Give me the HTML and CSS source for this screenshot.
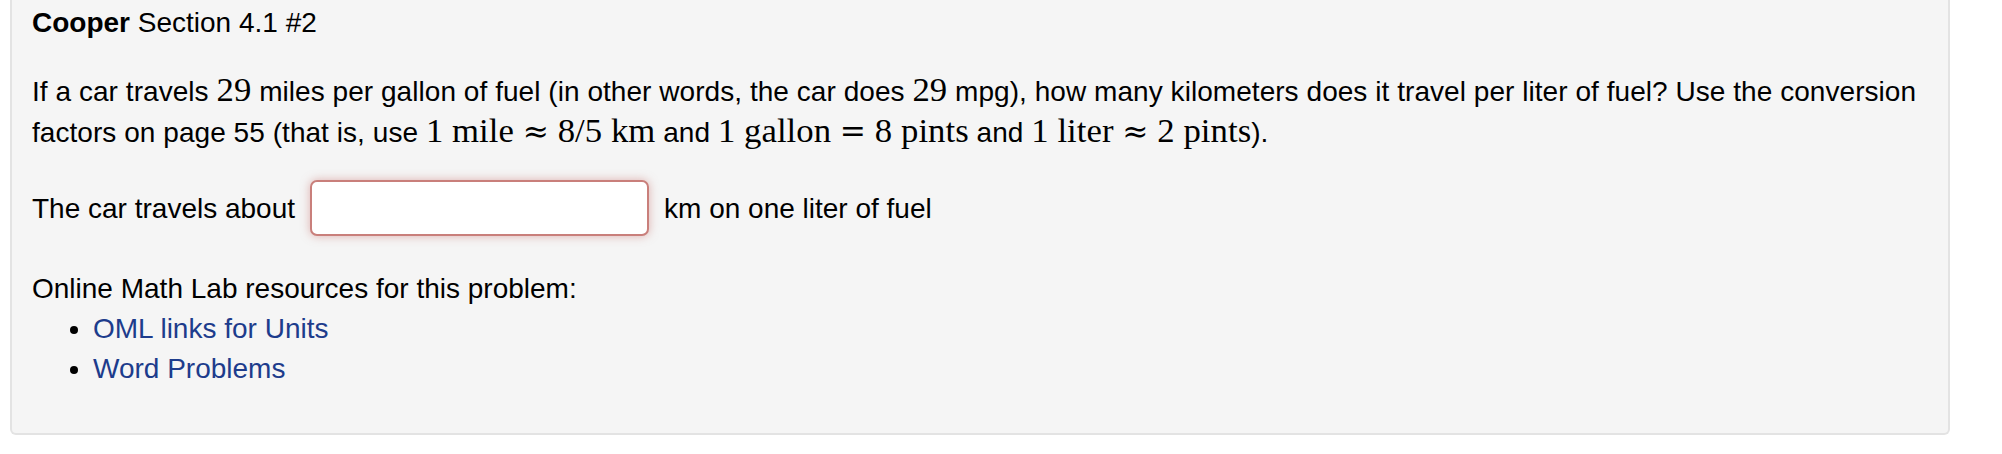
FILE: index.html
```html
<!DOCTYPE html>
<html>
<head>
<meta charset="utf-8">
<link rel="stylesheet" href="styles.css">
</head>
<body>
<div class="card">
  <div class="title"><b>Cooper</b> Section 4.1 #2</div>
  <p class="problem">If a car travels <span class="m">29</span> miles per gallon of fuel (in other words, the car does <span class="m">29</span> mpg), how many kilometers does it travel per liter of fuel? Use the conversion<br>factors on page 55 (that is, use <span class="m">1 mile<span class="rel">&#8776;</span>8/5 km</span> and <span class="m">1 gallon<span class="rel">=</span>8 pints</span> and <span class="m">1 liter<span class="rel">&#8776;</span>2 pints</span>).</p>
  <div class="answer">
    <span>The car travels about</span>
    <input class="ans-input" type="text">
    <span>km on one liter of fuel</span>
  </div>
  <div class="resources">Online Math Lab resources for this problem:</div>
  <ul class="links">
    <li><a href="#">OML links for Units</a></li>
    <li><a href="#">Word Problems</a></li>
  </ul>
</div>
</body>
</html>
```
FILE: styles.css
```css
html, body {
  margin: 0;
  padding: 0;
  background: #ffffff;
}
body {
  font-family: "Liberation Sans", Arial, sans-serif;
  font-size: 28px;
  line-height: 41px;
  color: #000;
}
.card {
  margin: 0 52px 0 10px;
  background: #f5f5f5;
  border: 2px solid #e3e3e3;
  border-top: 0;
  border-radius: 0 0 6px 6px;
  padding: 2px 20px 44px 20px;
}
.title {
  margin-bottom: 28px;
}
.problem {
  margin: 0 0 27px 0;
  letter-spacing: 0.05px;
}
.m {
  font-family: "Liberation Serif", "Times New Roman", serif;
  font-size: 1.24em;
  line-height: 1;
}
.rel {
  display: inline-block;
  padding: 0 0.28em;
  font-family: "DejaVu Serif", serif;
  font-size: 0.9em;
}
.answer {
  display: flex;
  align-items: center;
  gap: 14px;
  margin-bottom: 32px;
}
.ans-input {
  width: 339px;
  height: 56px;
  box-sizing: border-box;
  border: 2px solid #c97f7b;
  border-radius: 7px;
  background: #fff;
  box-shadow: 0 0 10px rgba(200, 110, 105, 0.5);
  margin: 0 1px;
  font-size: 28px;
}
.links {
  margin: 0;
  padding-left: 61px;
  line-height: 40px;
}
.links a {
  color: #1d3c8c;
  text-decoration: none;
}
```
